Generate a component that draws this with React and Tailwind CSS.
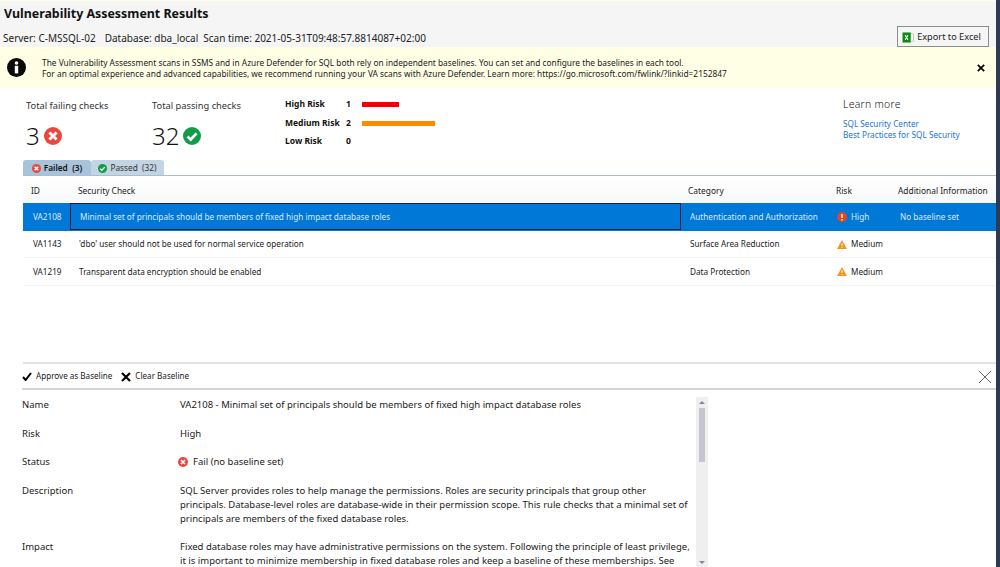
const FONT = { fontFamily: '"Noto Sans", "Open Sans", sans-serif' }

function FailIcon({ className }) {
  return (
    <svg viewBox="0 0 20 20" className={className}>
      <circle cx="10" cy="10" r="10" fill="#e8483f" />
      <path d="M6 6l8 8M14 6l-8 8" stroke="#fff" strokeWidth="3.2" fill="none" />
    </svg>
  )
}

function PassIcon({ className }) {
  return (
    <svg viewBox="0 0 20 20" className={className}>
      <circle cx="10" cy="10" r="10" fill="#0f9d4a" />
      <path d="M5 10.5l3.6 3.4L15 7" stroke="#fff" strokeWidth="3" fill="none" />
    </svg>
  )
}

function HighIcon() {
  return (
    <svg viewBox="0 0 20 20" className="h-[10px] w-[10px]">
      <circle cx="10" cy="10" r="10" fill="#e8451f" />
      <path d="M10 4v8" stroke="#fff" strokeWidth="3" />
      <circle cx="10" cy="15.5" r="1.7" fill="#fff" />
    </svg>
  )
}

function MediumIcon() {
  return (
    <svg viewBox="0 0 20 18" className="h-[9px] w-[10px]">
      <path d="M10 0l10 18H0z" fill="#f7941d" />
      <path d="M10 6v6" stroke="#fff" strokeWidth="2" />
      <circle cx="10" cy="15" r="1.2" fill="#fff" />
    </svg>
  )
}

function ExcelIcon() {
  return (
    <svg viewBox="0 0 12 12" className="h-[11px] w-[12px]">
      <rect x="5" y="2" width="7" height="8" fill="#fff" stroke="#9bc89b" strokeWidth="0.8" />
      <rect x="0" y="0.5" width="9" height="11" fill="#0e8a16" />
      <path d="M3 3.5l3 5M6 3.5l-3 5" stroke="#fff" strokeWidth="1.2" />
    </svg>
  )
}

function BoldCross({ className }) {
  return (
    <svg viewBox="0 0 10 10" className={className}>
      <path d="M1 1l8 8M9 1l-8 8" stroke="#000" strokeWidth="2.2" fill="none" />
    </svg>
  )
}

const rows = [
  { id: 'VA2108', check: 'Minimal set of principals should be members of fixed high impact database roles', category: 'Authentication and Authorization', risk: 'High', info: 'No baseline set', selected: true },
  { id: 'VA1143', check: "'dbo' user should not be used for normal service operation", category: 'Surface Area Reduction', risk: 'Medium', info: '' },
  { id: 'VA1219', check: 'Transparent data encryption should be enabled', category: 'Data Protection', risk: 'Medium', info: '' },
]

const risks = [
  { label: 'High Risk', count: 1, bar: 'w-[37px] bg-[#f50000]' },
  { label: 'Medium Risk', count: 2, bar: 'w-[73px] bg-[#fb8c00]' },
  { label: 'Low Risk', count: 0, bar: 'w-0' },
]

export default function App() {
  return (
    <div style={FONT} className="flex h-[567px] w-[1000px] overflow-hidden bg-white text-[#222]">
      <div className="flex min-w-0 flex-1 flex-col">
        {/* header */}
        <div className="flex h-[47px] shrink-0 items-end justify-between border-t border-t-[#fdfde8] bg-[#f5f5f5] pl-[3px] pr-[7px]">
          <div>
            <h1 className="pl-[1px] text-[12.4px] font-bold leading-[18px] text-[#111]">Vulnerability Assessment Results</h1>
            <div className="mt-[8px] flex gap-[5px] pb-[2px] text-[10px] leading-[14px]">
              <span className="pr-[4px]">Server: C-MSSQL-02</span>
              <span>Database: dba_local</span>
              <span>Scan time: 2021-05-31T09:48:57.8814087+02:00</span>
            </div>
          </div>
          <button className="flex h-[21px] w-[92px] items-center justify-center gap-[3px] border border-[#8c8c8c] bg-[#f5f5f5] pr-[3px] pt-[1px] text-[9.2px]">
            <ExcelIcon /> Export to Excel
          </button>
        </div>

        {/* banner */}
        <div className="flex h-[41px] shrink-0 items-center bg-[#ffffe6] pl-[7px] pr-[11px]">
          <svg viewBox="0 0 20 20" className="h-[19px] w-[19px] shrink-0">
            <circle cx="10" cy="10" r="10" fill="#0a0a0a" />
            <circle cx="10" cy="5.2" r="1.9" fill="#fff" />
            <rect x="8.2" y="8.2" width="3.6" height="8" fill="#fff" />
          </svg>
          <div className="ml-[16px] flex-1 text-[8.33px] leading-[11px] text-[#222]">
            <div>The Vulnerability Assessment scans in SSMS and in Azure Defender for SQL both rely on independent baselines. You can set and configure the baselines in each tool.</div>
            <div>For an optimal experience and advanced capabilities, we recommend running your VA scans with Azure Defender. Learn more: https://go.microsoft.com/fwlink/?linkid=2152847</div>
          </div>
          <BoldCross className="h-[8px] w-[8px]" />
        </div>

        {/* summary */}
        <div className="flex h-[72px] shrink-0 pl-[26px] pt-[11px]">
          <div className="w-[126px]">
            <div className="text-[9.3px] leading-[14px] text-[#333]">Total failing checks</div>
            <div className="mt-[7px] flex items-center gap-[4px]">
              <span className="text-[24px] font-light leading-[32px] text-[#111]">3</span>
              <FailIcon className="h-[18px] w-[18px]" />
            </div>
          </div>
          <div className="w-[133px]">
            <div className="text-[9.3px] leading-[14px] text-[#333]">Total passing checks</div>
            <div className="mt-[7px] flex items-center gap-[4px]">
              <span className="text-[24px] font-light leading-[32px] text-[#111]">32</span>
              <PassIcon className="h-[18px] w-[18px]" />
            </div>
          </div>
          <div className="-mt-[1px] flex w-[558px] flex-col gap-[5.5px]">
            {risks.map((r) => (
              <div key={r.label} className="flex h-[13px] items-center text-[8.5px] font-bold text-[#111]">
                <span className="w-[60px]">{r.label}</span>
                <span className="w-[17px] pl-[1px]">{r.count}</span>
                <span className={`h-[5px] ${r.bar}`} />
              </div>
            ))}
          </div>
          <div className="-mt-[1px]">
            <div className="text-[10.4px] font-light leading-[12px] tracking-[0.3px] text-[#111]">Learn more</div>
            <div className="mt-[8px] text-[8.2px] leading-[11px] text-[#1a73d8]">
              <div>SQL Security Center</div>
              <div>Best Practices for SQL Security</div>
            </div>
          </div>
        </div>

        {/* tabs */}
        <div className="ml-[23px] flex h-[16px] shrink-0 items-stretch border-b border-b-[#a4bfd9] text-[8.3px]">
          <div className="flex w-[68px] items-center justify-center gap-[3px] rounded-t-[3px] bg-[#a9c3da] pt-[1px] font-semibold text-[#111]">
            <FailIcon className="h-[9px] w-[9px]" /> Failed&nbsp;&nbsp;(3)
          </div>
          <div className="flex w-[73px] items-center justify-center gap-[3px] rounded-t-[3px] bg-[#c3d5e2] pt-[1px] text-[#333]">
            <PassIcon className="h-[9px] w-[9px]" /> Passed&nbsp;&nbsp;(32)
          </div>
        </div>

        {/* results table */}
        <div className="ml-[23px] flex h-[188px] shrink-0 flex-col border-b-2 border-b-[#e3e3e3] text-[8.2px]">
          <div className="grid h-[27px] shrink-0 grid-cols-[47px_611px_149px_62px_1fr] items-center bg-gradient-to-b from-white to-[#f7f8f8] pt-[3px] text-[8.4px] text-[#222]">
            <span className="pl-[8px]">ID</span>
            <span className="pl-[8px]">Security Check</span>
            <span className="pl-[7px]">Category</span>
            <span className="pl-[6px]">Risk</span>
            <span className="pl-[6px]">Additional Information</span>
          </div>
          {rows.map((r) => (
            <div key={r.id} className={`grid h-[27.5px] shrink-0 grid-cols-[47px_611px_149px_62px_1fr] items-center border-b ${r.selected ? 'border-b-[#0078d7] bg-[#0078d7] text-[#dcebf8]' : 'border-b-[#f4f4f4] text-[#222]'}`}>
              <span className="pl-[10px] pt-[1px]">{r.id}</span>
              <span className={`flex h-full items-center pl-[9px] pt-[1px] ${r.selected ? 'border border-[#10243c]' : ''}`}>{r.check}</span>
              <span className="pl-[9px] pt-[1px]">{r.category}</span>
              <span className="flex items-center gap-[4px] pl-[7px] pt-[1px]">
                {r.risk === 'High' ? <HighIcon /> : <MediumIcon />}
                {r.risk}
              </span>
              <span className="pl-[8px] pt-[1px]">{r.info}</span>
            </div>
          ))}
        </div>

        {/* toolbar */}
        <div className="ml-[22px] flex h-[26px] shrink-0 items-center border-b-2 border-b-[#d5d5d5] pr-[4px] pt-[1px] text-[8.1px] text-[#222]">
          <svg viewBox="0 0 10 9" className="h-[9px] w-[10px]">
            <path d="M1 5l2.6 3L9 1" stroke="#000" strokeWidth="2" fill="none" />
          </svg>
          <span className="ml-[4px]">Approve as Baseline</span>
          <BoldCross className="ml-[9px] h-[10px] w-[10px]" />
          <span className="ml-[4px]">Clear Baseline</span>
          <svg viewBox="0 0 14 14" className="ml-auto h-[14px] w-[14px]">
            <path d="M1 1l12 12M13 1L1 13" stroke="#666" strokeWidth="1" fill="none" />
          </svg>
        </div>

        {/* details */}
        <div className="flex min-h-0 flex-1 pl-[22px] text-[9.5px] leading-[14px] text-[#222]">
          <div className="w-[674px] overflow-hidden pt-[8px]">
            <div className="grid grid-cols-[158px_511px] gap-y-[14.5px]">
              <span>Name</span>
              <span>VA2108 - Minimal set of principals should be members of fixed high impact database roles</span>
              <span>Risk</span>
              <span>High</span>
              <span>Status</span>
              <span className="-ml-[2px] flex items-center gap-[5px]"><FailIcon className="h-[10px] w-[10px]" /> Fail (no baseline set)</span>
              <span>Description</span>
              <span>SQL Server provides roles to help manage the permissions. Roles are security principals that group other principals. Database-level roles are database-wide in their permission scope. This rule checks that a minimal set of principals are members of the fixed database roles.</span>
              <span>Impact</span>
              <span>Fixed database roles may have administrative permissions on the system. Following the principle of least privilege, it is important to minimize membership in fixed database roles and keep a baseline of these memberships. See</span>
            </div>
          </div>
          <div className="mt-[7px] flex h-[170px] w-[12px] shrink-0 flex-col items-center bg-[#efefef]">
            <span className="mt-[4px] h-0 w-0 border-x-[3px] border-b-[3px] border-x-transparent border-b-[#7f8a9c]" />
            <span className="mt-[4px] h-[54px] w-[6px] bg-[#c6c6d0]" />
            <span className="mb-[3px] mt-auto h-0 w-0 border-x-[3px] border-t-[3px] border-x-transparent border-t-[#7f8a9c]" />
          </div>
        </div>
      </div>
      <div className="w-[4px] shrink-0 bg-[#2b3a55]" />
    </div>
  )
}
